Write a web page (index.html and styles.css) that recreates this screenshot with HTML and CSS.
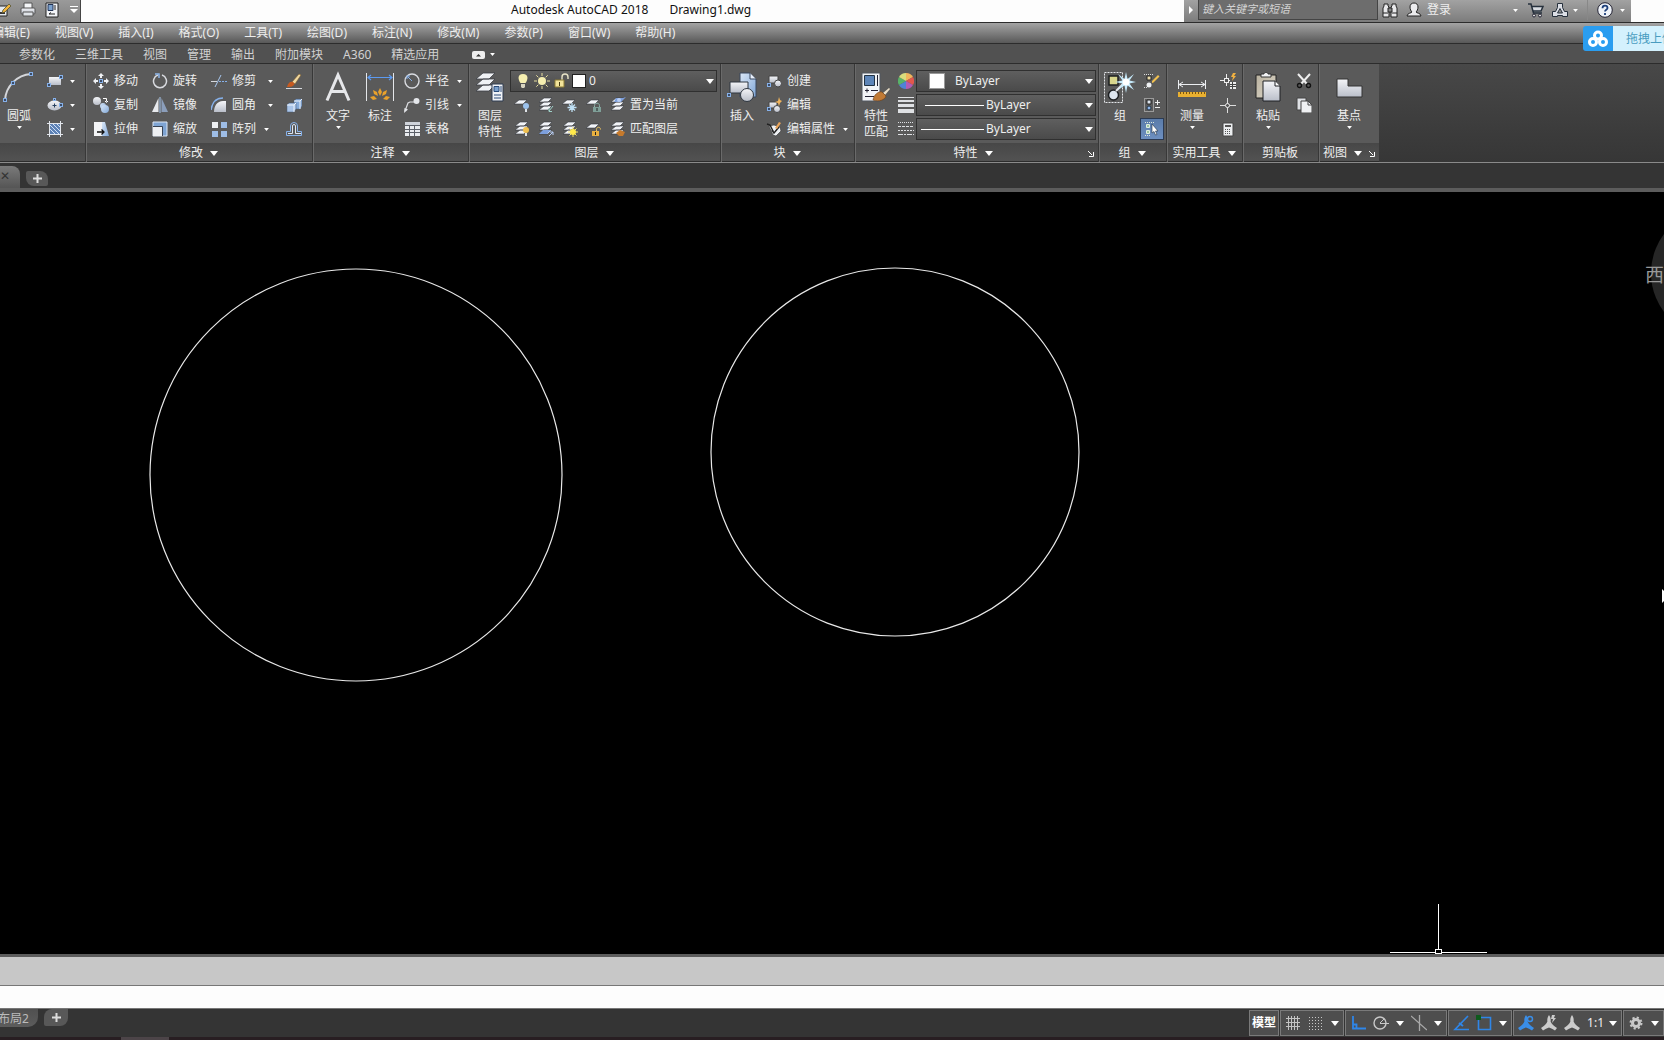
FILE: index.html
```html
<!DOCTYPE html>
<html lang="zh-CN">
<head>
<meta charset="utf-8">
<title>Autodesk AutoCAD 2018 - Drawing1.dwg</title>
<link rel="stylesheet" href="styles.css">
</head>
<body>
<svg class="defs" aria-hidden="true">
  <defs>
    <linearGradient id="steel" x1="0" y1="0" x2="0" y2="1"><stop offset="0" stop-color="#f4f5f8"/><stop offset="1" stop-color="#b9bec9"/></linearGradient>
    <linearGradient id="sky" x1="0" y1="0" x2="1" y2="1"><stop offset="0" stop-color="#dbe8f8"/><stop offset="1" stop-color="#7fa6d6"/></linearGradient>
    <linearGradient id="tan" x1="0" y1="0" x2="1" y2="1"><stop offset="0" stop-color="#b9b19f"/><stop offset="1" stop-color="#ddd8ca"/></linearGradient>
  </defs>
  <symbol id="down" viewBox="0 0 8 5"><path d="M0 0h8L4 5z"/></symbol>
  <symbol id="stack" viewBox="0 0 16 16"><path d="M6 1h8l-4 4H1zM6 5h8l-4 4H1zM6 9h8l-4 4H1z" fill="#f2f4f8" stroke="#33383e" stroke-width=".6"/></symbol>
  <symbol id="sheet" viewBox="0 0 16 16"><path d="M5 3h8L9 7H0z" fill="#f2f4f8" stroke="#33383e" stroke-width=".6"/></symbol>
  <symbol id="person" viewBox="0 0 16 16"><path d="M8 0c1.500 2 2 4.500 1.600 6.500C10.500 9 13 11 16 13l-2 2.500c-2-1.500-4-2.500-6-3-2 .5-4 1.500-6 3L0 13c3-2 5.500-4 6.400-6.500C6 4.500 6.500 2 8 0z"/></symbol>
</svg>

<header class="titlebar">
  <div class="quick">
    <button class="ic" aria-label="另存为"><svg width="16" height="16" viewBox="0 0 16 16"><path d="M0 4h11v10H0z" fill="#e4e9f0" stroke="#222"/><path d="M0 11h9" stroke="#333" stroke-width="2"/><path d="M6 11l1-3 6-6 2 2-6 6z" fill="#f2b43c" stroke="#553" stroke-width=".8"/></svg></button>
    <button class="ic" aria-label="打印"><svg width="16" height="16" viewBox="0 0 16 16"><path d="M4 7V1h8v6" fill="#f5f6f8" stroke="#555"/><rect x="1" y="6" width="14" height="6" rx="1" fill="url(#steel)" stroke="#555"/><path d="M3 10h10v4H3z" fill="#dfe3e8" stroke="#555"/></svg></button>
    <button class="ic" aria-label="图纸集"><svg width="16" height="16" viewBox="0 0 16 16"><path d="M2 1h12v14H2z" fill="#f2f4f7" stroke="#222"/><path d="M4 2.500h5v6H4z" fill="#7aa0cc" stroke="#235"/><path d="M11 3v5M5 12h6M5 12l2-1.500" stroke="#222"/></svg></button>
    <button class="ic more" aria-label="自定义快速访问工具栏"><svg width="8" height="8" viewBox="0 0 8 8" fill="#fff"><path d="M0 0h8v1H0zM0 3h8L4 7z"/></svg></button>
  </div>
  <h1 class="caption"><span>Autodesk AutoCAD 2018</span><span>Drawing1.dwg</span></h1>
  <div class="info">
    <button class="expand" aria-label="收拢"><svg width="4" height="8" viewBox="0 0 4 8"><path d="M0 0l4 4-4 4z" fill="#fff"/></svg></button>
    <input class="search" type="text" aria-label="搜索" placeholder="键入关键字或短语">
    <button class="ic" aria-label="查找"><svg width="16" height="16" viewBox="0 0 16 16"><path d="M2 2h4v2l1 1v10H1V6l1-2zM10 2h4v2l1 2v9H9V5l1-1zM6 6h4v4H6z" fill="#e8e8ea" stroke="#222"/><path d="M1 11h5M10 11h5" stroke="#222"/></svg></button>
    <button class="login"><svg width="16" height="16" viewBox="0 0 16 16"><path d="M8 1c2.500 0 4 1.500 4 4s-1 4-2 5c0 1 5 1 5 4H1c0-3 5-3 5-4-1-1-2-2.500-2-5s1.500-4 4-4z" fill="#ececee" stroke="#222"/></svg><span>登录</span><svg class="tiny" width="5" height="3"><use href="#down"/></svg></button>
    <button class="ic cart" aria-label="应用商店"><svg width="16" height="16" viewBox="0 0 16 16"><path d="M3.500 4.500H15L13 9.500H5.500z" fill="#d8dbe0"/><path d="M0 2h3l2.500 9H14M4 4.500h11L13 9H5" fill="none" stroke="#26303c" stroke-width="1.500"/><circle cx="6" cy="13.500" r="1.500" fill="#ddd" stroke="#223"/><circle cx="12" cy="13.500" r="1.500" fill="#ddd" stroke="#223"/></svg></button>
    <button class="a360" aria-label="保持连接"><svg width="16" height="16" viewBox="0 0 16 16"><path d="M5.500 1.500h5v4l2 4h3v5h-5v-1h-5v1h-5v-5h3l2-4zM8 6.500l-2.500 4.500h5z" fill="#dcdfe6" fill-rule="evenodd" stroke="#26303c" stroke-linejoin="round"/></svg><svg class="tiny" width="5" height="3"><use href="#down"/></svg></button>
    <button class="help" aria-label="帮助"><svg width="16" height="16" viewBox="0 0 16 16"><circle cx="8" cy="8" r="7.300" fill="#eef2f8" stroke="#223"/><path d="M5.500 6.200C5.500 2.800 10.500 3 10.500 6c0 1.600-2.500 1.800-2.500 3.500M8 11v2" fill="none" stroke="#1d3f7a" stroke-width="1.800"/></svg><svg class="tiny" width="5" height="3"><use href="#down"/></svg></button>
  </div>
</header>

<nav class="menubar" aria-label="菜单">
  <button>编辑(E)</button><button>视图(V)</button><button>插入(I)</button><button>格式(O)</button><button>工具(T)</button><button>绘图(D)</button><button>标注(N)</button><button>修改(M)</button><button>参数(P)</button><button>窗口(W)</button><button>帮助(H)</button>
</nav>

<nav class="tabs" aria-label="功能区选项卡">
  <button>参数化</button><button>三维工具</button><button>视图</button><button>管理</button><button>输出</button><button>附加模块</button><button>A360</button><button>精选应用</button>
  <button class="fold" aria-label="最小化功能区"><svg width="13" height="8" viewBox="0 0 13 8"><rect width="13" height="8" rx="2" fill="#eee"/><path d="M4 5.500h5L6.500 3z" fill="#333"/></svg><svg class="tiny" width="5" height="3"><use href="#down"/></svg></button>
</nav>

<main class="ribbon">
  <section class="panel draw">
    <div class="body">
      <button class="big"><svg width="32" height="32" viewBox="0 0 32 32"><path d="M2 29C3 15 14 4 28 3" fill="none" stroke="#d4d6da" stroke-width="2"/><g fill="#3c4c66" stroke="#86b1ea"><rect x=".5" y="27.500" width="3" height="3"/><rect x="8.500" y="10.500" width="3" height="3"/><rect x="26.500" y="1.500" width="3" height="3"/></g></svg><span>圆弧</span><svg class="tiny" width="5" height="3"><use href="#down"/></svg></button>
      <div class="col icons">
        <button class="row" aria-label="矩形"><svg width="16" height="16" viewBox="0 0 16 16"><rect x="2" y="4" width="12" height="8" fill="url(#steel)"/><g fill="#3c4c66" stroke="#86b1ea"><rect x=".5" y="10.500" width="3" height="3"/><rect x="12.500" y="2.500" width="3" height="3"/></g></svg><svg class="tiny" width="5" height="3"><use href="#down"/></svg></button>
        <button class="row" aria-label="椭圆"><svg width="16" height="16" viewBox="0 0 16 16"><ellipse cx="7.500" cy="8.500" rx="7" ry="5" fill="url(#steel)"/><path d="M5.500 8.500h4M7.500 6.500v4" stroke="#26405f"/><g fill="#3c4c66" stroke="#86b1ea"><rect x="12.500" y="6.500" width="3" height="3"/><rect x="6.500" y="1.500" width="2" height="2"/></g></svg><svg class="tiny" width="5" height="3"><use href="#down"/></svg></button>
        <button class="row" aria-label="图案填充"><svg width="16" height="16" viewBox="0 0 16 16"><rect x="3" y="3" width="10" height="10" fill="#5c81b5"/><path d="M3 8l5 5M3 4l9 9M6 3l7 7M10 3l3 3" stroke="#cfe0f7"/><path d="M0 2.500h16M0 13.500h16M2.500 0v16M13.500 0v16" stroke="#e2e6ec"/></svg><svg class="tiny" width="5" height="3"><use href="#down"/></svg></button>
      </div>
    </div>
    <h2></h2>
  </section>

  <section class="panel modify">
    <div class="body">
      <div class="col c1">
        <button class="row"><svg width="16" height="16" viewBox="0 0 16 16"><path d="M8 0l3 3H9v2H7V3H5zM8 16l3-3H9v-2H7v2H5zM0 8l3-3v2h2v2H3v2zM16 8l-3-3v2h-2v2h2v2z" fill="#f0f2f5"/><rect x="6.500" y="6.500" width="3" height="3" fill="#3c4c66" stroke="#86b1ea"/></svg><span>移动</span></button>
        <button class="row"><svg width="16" height="16" viewBox="0 0 16 16"><circle cx="4" cy="4" r="4" fill="url(#steel)"/><circle cx="10" cy="9" r="3" fill="url(#sky)"/><circle cx="12" cy="12" r="4" fill="url(#sky)"/><path d="M10 1.500h3.500v3M12 4l1.500 1.500L15 4" fill="none" stroke="#fff"/></svg><span>复制</span></button>
        <button class="row"><svg width="16" height="16" viewBox="0 0 16 16"><path d="M9 1h3l4 14H9z" fill="url(#sky)"/><path d="M1 1h8v14H1z" fill="#f3f4f6"/><path d="M4 11h7M8.500 8.500L11 11l-2.500 2.500" fill="none" stroke="#111" stroke-width="1.300"/></svg><span>拉伸</span></button>
      </div>
      <div class="col c2">
        <button class="row"><svg width="16" height="16" viewBox="0 0 16 16"><path d="M10 2a6.500 6.500 0 1 1-4 0" fill="none" stroke="#d9dbe0" stroke-width="1.500"/><path d="M3 1h4v4" fill="none" stroke="#8fb6ea" stroke-width="1.500"/></svg><span>旋转</span></button>
        <button class="row"><svg width="16" height="16" viewBox="0 0 16 16"><path d="M6.500 1v14H0z" fill="#e8eaee"/><path d="M9.500 1v14H16z" fill="#8b9ebb"/><path d="M8 0v16" stroke="#a8c8f0"/></svg><span>镜像</span></button>
        <button class="row"><svg width="16" height="16" viewBox="0 0 16 16"><path d="M1 1h14v14H1z" fill="#7ea4d3" stroke="#dce6f4"/><path d="M1 6h9v9H1z" fill="#eef0f3"/><path d="M10.500 15V5.500H1" fill="none" stroke="#384354"/></svg><span>缩放</span></button>
      </div>
      <div class="col c3">
        <button class="row"><svg width="16" height="16" viewBox="0 0 16 16"><path d="M0 8.500h6" stroke="#d6d8dc"/><path d="M8 8.500h8" stroke="#86b1ea" stroke-dasharray="2 1"/><path d="M4 14L10 2" stroke="#a8c8f0"/></svg><span>修剪</span><svg class="tiny" width="5" height="3"><use href="#down"/></svg></button>
        <button class="row"><svg width="16" height="16" viewBox="0 0 16 16"><path d="M0 13C1 6 4 1 12 1" fill="none" stroke="#86b1ea" stroke-width="1.500"/><path d="M3 15c0-6 3-11 9-11h3v11z" fill="url(#steel)"/></svg><span>圆角</span><svg class="tiny" width="5" height="3"><use href="#down"/></svg></button>
        <button class="row array"><svg width="16" height="16" viewBox="0 0 16 16"><rect x="1" y="1" width="6" height="6" fill="#eef0f3"/><path d="M10 1h6v6h-6zM1 10h6v6H1zM10 10h6v6h-6z" fill="#9ebde6"/></svg><span>阵列</span><svg class="tiny" width="5" height="3"><use href="#down"/></svg></button>
      </div>
      <div class="col">
        <button class="row" aria-label="删除"><svg width="16" height="16" viewBox="0 0 16 16"><path d="M6 9l7-8 2 1-6 9z" fill="#f0d9a0" stroke="#7c5a2e" stroke-width=".6"/><path d="M1 14c1-4 3-6 6-5l1.500 2C7 14 4 14 1 14z" fill="#c65a20"/><path d="M0 15.500h16" stroke="#d8dbe0"/></svg></button>
        <button class="row" aria-label="分解"><svg width="16" height="16" viewBox="0 0 16 16"><path d="M8 4l2-2h6v7l-2 3H8z" fill="#86abd9" stroke="#4b5d78" stroke-width=".5"/><path d="M8 4h6v8M14 4l2-2" fill="none" stroke="#eef4fc"/><path d="M1 8l2-2h7v6l-2 3H1z" fill="#a9c4e8" stroke="#4b5d78" stroke-width=".5"/><path d="M1 8h7v7M8 8l2-2" fill="none" stroke="#eef4fc"/></svg></button>
        <button class="row" aria-label="偏移"><svg width="16" height="16" viewBox="0 0 16 16"><path d="M.5 14.500h15v-4h-4V5a3.500 3.500 0 0 0-7 0v5.500h-4z" fill="none" stroke="#86b1ea"/><path d="M2 12.500h4.500V5a1.500 1.500 0 0 1 3 0v7.500H15" fill="none" stroke="#dce6f4"/></svg></button>
      </div>
    </div>
    <h2>修改<svg class="down" width="8" height="5"><use href="#down"/></svg></h2>
  </section>

  <section class="panel note">
    <div class="body">
      <button class="big"><svg width="32" height="32" viewBox="0 0 32 32"><path d="M5 29.500L16 4l11 25.500M9 20.500h14" fill="none" stroke="#e6e7ea" stroke-width="3"/></svg><span>文字</span><svg class="tiny" width="5" height="3"><use href="#down"/></svg></button>
      <button class="big dim"><svg width="32" height="32" viewBox="0 0 32 32"><path d="M2.500 2v28M29.500 2v28" stroke="#e4e6ea"/><path d="M4 6.500h24M7 4L4 6.500 7 9M25 4l3 2.500L25 9" fill="none" stroke="#5c9af0" stroke-width="1.200"/><g fill="#e9a22c"><path d="M16 17l2 4-2 4-2-4zM9 19l4 2 1 4-4-2zM23 19l-4 2-1 4 4-2zM6 26l4-1 3 3-4 1zM26 26l-4-1-3 3 4 1z"/></g></svg><span>标注</span></button>
      <div class="col">
        <button class="row"><svg width="16" height="16" viewBox="0 0 16 16"><circle cx="8" cy="8" r="7" fill="none" stroke="#d9dbe0" stroke-width="1.400"/><path d="M3 3l5 5M3 6V3h3" fill="none" stroke="#86b1ea"/></svg><span>半径</span><svg class="tiny" width="5" height="3"><use href="#down"/></svg></button>
        <button class="row"><svg width="16" height="16" viewBox="0 0 16 16"><path d="M1 14l3-8 2-1h4" fill="none" stroke="#dcdee2" stroke-width="1.200"/><path d="M0 16l.5-5L4 12.500z" fill="#e4e6ea"/><circle cx="12.500" cy="4" r="3" fill="#e4e6ea"/></svg><span>引线</span><svg class="tiny" width="5" height="3"><use href="#down"/></svg></button>
        <button class="row"><svg width="16" height="16" viewBox="0 0 16 16"><path d="M1 1h15v14H1z" fill="#e9ebee"/><path d="M1 1h15v3H1z" fill="#cfd3da"/><path d="M1 4.500h15M1 8.500h15M1 11.500h15M5.500 4v11M10.500 4v11" stroke="#5c6068"/></svg><span>表格</span></button>
      </div>
    </div>
    <h2>注释<svg class="down" width="8" height="5"><use href="#down"/></svg></h2>
  </section>

  <section class="panel layers">
    <div class="body">
      <button class="big"><svg width="32" height="32" viewBox="0 0 32 32"><path d="M9 2h12l-6 6H2zM9 8h12l-6 6H2zM9 14h12l-6 6H2z" fill="#f0f2f5" stroke="#3a3e44" stroke-width=".8"/><path d="M18 13h11v17H18z" fill="#f2f4f7" stroke="#2c3a50"/><path d="M20 15.500h5v5h-5z" fill="#7aa0cc" stroke="#2b4b78"/><path d="M27 15v6M20 24h7M20 27h7" stroke="#2b4b78"/></svg><span>图层</span><span>特性</span></button>
      <div class="col">
        <div class="row"><div class="combo layer">
          <svg width="16" height="16" viewBox="0 0 16 16"><path d="M8 1c6 0 5 6 2.500 9h-5C3 7 2 1 8 1z" fill="#f6efb0"/><path d="M6 11h4v3l-1 1H7l-1-1z" fill="#d8d4c0"/></svg>
          <svg width="16" height="16" viewBox="0 0 16 16"><circle cx="8" cy="8" r="4" fill="#f6efb0"/><path d="M8 0v3M8 13v3M0 8h3M13 8h3M2.300 2.300l2 2M11.700 11.700l2 2M13.700 2.300l-2 2M4.300 11.700l-2 2" stroke="#e8dfa0"/></svg>
          <svg width="16" height="16" viewBox="0 0 16 16"><path d="M9 7V4c0-4 6-4 6 0v2" fill="none" stroke="#e8e4c8" stroke-width="1.400"/><path d="M2 7h9v7H2z" fill="#f3e49a" stroke="#8b7a34"/><path d="M6.500 9v4" stroke="#443a10"/></svg>
          <i class="chip"></i>
          <select aria-label="图层"><option>0</option></select><svg class="down" width="8" height="5"><use href="#down"/></svg>
        </div></div>
        <div class="row set">
          <button class="ic" aria-label="关闭图层"><svg width="16" height="16"><use href="#sheet"/><circle cx="12" cy="9" r="3" fill="#9cc2ec"/><path d="M11 12h2v3h-2z" fill="#dfe3e8"/></svg></button>
          <button class="ic" aria-label="隔离图层"><svg width="16" height="16"><use href="#stack"/><path d="M15 9l-4 5M11 11v3.500h3" stroke="#9fd0c8" fill="none"/></svg></button>
          <button class="ic" aria-label="冻结图层"><svg width="16" height="16"><use href="#sheet"/><path d="M10 6v9M5.500 10.500h9M7 7.500l6 6M13 7.500l-6 6" stroke="#bfe0f5" stroke-width="1.300"/></svg></button>
          <button class="ic" aria-label="锁定图层"><svg width="16" height="16"><use href="#sheet"/><path d="M8.500 11V8.500c0-3 5-3 5 0V11" fill="none" stroke="#8fb3ab"/><path d="M7 10h8v5H7z" fill="#7f9f98"/><path d="M11 11v3" stroke="#222"/></svg></button>
          <button class="text"><svg width="16" height="16"><use href="#stack"/><path d="M6 1h7l3-1-5 5H4z" fill="#7d9fdc"/><circle cx="9" cy="3" r="2" fill="#b9cff5"/></svg><span>置为当前</span></button>
        </div>
        <div class="row set">
          <button class="ic" aria-label="打开所有图层"><svg width="16" height="16"><use href="#stack"/><circle cx="12" cy="9" r="3" fill="#f0c050"/><path d="M11 12h2v3h-2z" fill="#dfe3e8"/></svg></button>
          <button class="ic" aria-label="取消隔离"><svg width="16" height="16"><use href="#stack"/><path d="M5 9h8l-4 4H1z" fill="#7d9fdc"/><path d="M11 15l4-4M12 11h3v3" stroke="#b9cff5" fill="none"/></svg></button>
          <button class="ic" aria-label="解冻所有图层"><svg width="16" height="16"><use href="#stack"/><path d="M11 6v10M6 11h10M7.500 7.500l7 7M14.500 7.500l-7 7" stroke="#f0e070"/><circle cx="11" cy="11" r="3" fill="#ffe94a"/></svg></button>
          <button class="ic" aria-label="解锁图层"><svg width="16" height="16"><use href="#sheet"/><path d="M10.500 11V8.500c0-3 4-3 4 0" fill="none" stroke="#e8c060"/><path d="M6 10h7v5H6z" fill="#e8b040"/><path d="M9.500 11v3" stroke="#222"/></svg></button>
          <button class="text"><svg width="16" height="16"><use href="#stack"/><path d="M6 12l4-3 5 2-2 4H9z" fill="#c67a2c"/></svg><span>匹配图层</span></button>
        </div>
      </div>
    </div>
    <h2>图层<svg class="down" width="8" height="5"><use href="#down"/></svg></h2>
  </section>

  <section class="panel block">
    <div class="body">
      <button class="big"><svg width="32" height="32" viewBox="0 0 32 32"><path d="M14 2h10l6 6v18H14z" fill="url(#sky)" stroke="#39475c"/><path d="M24 2v6h6" fill="#eaf1fb" stroke="#39475c"/><path d="M4 11h18v11H4z" fill="url(#steel)" stroke="#2e3640"/><circle cx="21" cy="24" r="6.500" fill="url(#steel)" stroke="#2e3640"/><rect x="1.500" y="22.500" width="3" height="3" fill="#3c4c66" stroke="#86b1ea"/></svg><span>插入</span></button>
      <div class="col">
        <button class="row"><svg width="16" height="16" viewBox="0 0 16 16"><path d="M3 3h9v7H3z" fill="url(#steel)" stroke="#444"/><circle cx="12" cy="10.500" r="3.500" fill="url(#steel)" stroke="#444"/><rect x="1.500" y="10.500" width="3" height="3" fill="#3c4c66" stroke="#86b1ea"/></svg><span>创建</span></button>
        <button class="row"><svg width="16" height="16" viewBox="0 0 16 16"><path d="M3 5h8v6H3z" fill="url(#steel)" stroke="#444"/><circle cx="11" cy="12" r="3.500" fill="url(#steel)" stroke="#444"/><rect x="1.500" y="10.500" width="3" height="3" fill="#3c4c66" stroke="#86b1ea"/><path d="M9 5l3-1 1-4 1 3 2 1-2 2-1 3-1-3z" fill="#f0b45c"/></svg><span>编辑</span></button>
        <button class="row"><svg width="16" height="16" viewBox="0 0 16 16"><path d="M3 5l5-1 6 2 1 4-5 5-3-1z" fill="#eef0f3" stroke="#333" stroke-width=".6"/><path d="M6 9l2 3 5-6" fill="none" stroke="#222" stroke-width="1.500"/><path d="M9 7l4-6 2 1-4 6z" fill="#e9a45a"/><path d="M1 3l3 1 3 6" fill="none" stroke="#222" stroke-width="1.500"/></svg><span>编辑属性</span><svg class="tiny" width="5" height="3"><use href="#down"/></svg></button>
      </div>
    </div>
    <h2>块<svg class="down" width="8" height="5"><use href="#down"/></svg></h2>
  </section>

  <section class="panel props">
    <div class="body">
      <button class="big"><svg width="32" height="32" viewBox="0 0 32 32"><path d="M2 2h18v28H2z" fill="#f2f4f7" stroke="#50565e"/><path d="M4.500 4.500h10v10h-10z" fill="#5d85b8" stroke="#234"/><path d="M17.500 4v11M5 19.500h4M7 17.500v4M11 19.500h7M5 25.500h9" stroke="#223"/><path d="M23 22l6-5 1 1-5 6z" fill="#ece0c8"/><path d="M13 29c1-5 5-9 9-8l4 4c-1 4-7 6-13 4z" fill="#c07a35" stroke="#6a3c14" stroke-width=".6"/></svg><span>特性</span><span>匹配</span></button>
      <div class="col">
        <div class="row"><svg width="16" height="16" viewBox="0 0 16 16"><path d="M8 8V0a8 8 0 0 1 7 4z" fill="#f0b45c"/><path d="M8 8l7-4a8 8 0 0 1 0 8z" fill="#e2574c"/><path d="M8 8l7 4a8 8 0 0 1-7 4z" fill="#b35bb5"/><path d="M8 8v8a8 8 0 0 1-7-4z" fill="#4f83d6"/><path d="M8 8l-7 4a8 8 0 0 1 0-8z" fill="#58b368"/><path d="M8 8L1 4a8 8 0 0 1 7-4z" fill="#d9dc7c"/></svg><div class="combo color"><i class="chip"></i><select aria-label="对象颜色"><option>ByLayer</option></select><svg class="down" width="8" height="5"><use href="#down"/></svg></div></div>
        <div class="row"><svg width="16" height="16" viewBox="0 0 16 16" fill="#dfe1e4"><path d="M0 0h16v1H0zM0 3h16v2H0zM0 7h16v3H0zM0 12h16v4H0z"/></svg><div class="combo line"><i class="rule"></i><select aria-label="线宽"><option>ByLayer</option></select><svg class="down" width="8" height="5"><use href="#down"/></svg></div></div>
        <div class="row"><svg width="16" height="16" viewBox="0 0 16 16" fill="none" stroke="#dfe1e4"><path d="M0 1.500h16" stroke-dasharray="1 1"/><path d="M0 5.500h16" stroke-dasharray="3 1"/><path d="M0 9.500h16" stroke-dasharray="2 1"/><path d="M0 13.500h16" stroke-dasharray="5 1 2 1"/></svg><div class="combo line wide"><i class="rule"></i><select aria-label="线型"><option>ByLayer</option></select><svg class="down" width="8" height="5"><use href="#down"/></svg></div></div>
      </div>
    </div>
    <h2>特性<svg class="down" width="8" height="5"><use href="#down"/></svg><button class="launch" aria-label="特性选项板"><svg width="6" height="6" viewBox="0 0 6 6"><path d="M0 0l4 4M1 5.500h4.500V1" fill="none" stroke="#fff"/></svg></button></h2>
  </section>

  <section class="panel group">
    <div class="body">
      <button class="big"><svg width="32" height="32" viewBox="0 0 32 32"><rect x=".5" y="1.500" width="18" height="30" fill="none" stroke="#e4e6ea" stroke-dasharray="2 1"/><path d="M5 5h9v9H5z" fill="#d8d68c" stroke="#1d1f22" stroke-width="1.500"/><circle cx="9.500" cy="24" r="5" fill="#dce4ee" stroke="#1d1f22" stroke-width="1.500"/><path d="M12 20l7-7" stroke="#e6e8ec" stroke-width="2"/><path d="M22 1l1.500 7L30 3l-4.500 6.500L32 11l-6.500 1.500L30 19l-6.500-4.500L22 22l-1.500-7.500L14 19l4.500-6.500L11 11l7.500-1.500L14 3l6.500 5z" fill="#c5e9fa"/><circle cx="22" cy="11" r="3.500" fill="#fff"/></svg><span>组</span></button>
      <div class="col">
        <button class="row" aria-label="解除编组"><svg width="16" height="16" viewBox="0 0 16 16"><path d="M0 1.500h10M0 14.500h3" stroke="#ddd" stroke-dasharray="1 1"/><path d="M3 3h4v4H3z" fill="#e8d9a8" stroke="#222"/><circle cx="5" cy="12" r="2.500" fill="#eef0f3"/><path d="M8 8l6-6 1.500 1.500-6 6L8 10z" fill="#f0c050"/></svg></button>
        <button class="row" aria-label="组编辑"><svg width="16" height="16" viewBox="0 0 16 16"><rect x=".5" y="1.500" width="9" height="13" fill="none" stroke="#ddd" stroke-dasharray="1 1"/><path d="M3 3h4v4H3z" fill="#dfe6ee" stroke="#222"/><circle cx="5" cy="11" r="2" fill="#8fb6ea" stroke="#234"/><path d="M11 5.500h5M13.500 3v5M11 10.500h5" stroke="#eee"/></svg></button>
        <button class="row on" aria-label="启用组选择" aria-pressed="true"><svg width="16" height="16" viewBox="0 0 16 16"><path d="M1 1.500h10M1 14.500h5" stroke="#dfe8d8" stroke-dasharray="1 1"/><path d="M2.500 3.500h3v3h-3zM2.500 9.500h3v3h-3z" fill="#9cc4a0" stroke="#dfeee0"/><path d="M8 3l6 7h-2.500l1.500 3.500-1.500.5-1.500-3.500L8 12z" fill="#fff" stroke="#234" stroke-width=".6"/></svg></button>
      </div>
    </div>
    <h2>组<svg class="down" width="8" height="5"><use href="#down"/></svg></h2>
  </section>

  <section class="panel util">
    <div class="body">
      <button class="big"><svg width="32" height="32" viewBox="0 0 32 32"><path d="M2.500 9v9M29.500 9v9M3 13.500h26M7 11l-4 2.500L7 16M25 11l4 2.500-4 2.500" fill="none" stroke="#eceef1"/><path d="M2 21h28v5H2z" fill="#e9b030"/><path d="M4.500 21v2M7.500 21v2M10.500 21v2M13.500 21v2M16.500 21v2M19.500 21v2M22.500 21v2M25.500 21v2M28.500 21v2" stroke="#7b5510"/></svg><span>测量</span><svg class="tiny" width="5" height="3"><use href="#down"/></svg></button>
      <div class="col">
        <button class="row" aria-label="快速选择"><svg width="16" height="16" viewBox="0 0 16 16"><path d="M0 7.500h10M6.500 1v12" stroke="#eee"/><rect x="4.500" y="5.500" width="4" height="4" fill="#555" stroke="#eee"/><path d="M13 0h3l-2 3h2l-4 5 1-4h-2z" fill="#f0b040"/><path d="M10 9h6v7h-6z" fill="#eee"/><path d="M10 11.500h6M10 13.500h6M12.500 9v7" stroke="#444"/></svg></button>
        <button class="row" aria-label="点坐标"><svg width="16" height="16" viewBox="0 0 16 16"><path d="M0 8.500h16M7.500 1v15" stroke="#ddd"/><circle cx="7.500" cy="8.500" r="2" fill="#555" stroke="#eee"/></svg></button>
        <button class="row" aria-label="快速计算器"><svg width="16" height="16" viewBox="0 0 16 16"><path d="M3 2h10v13H3z" fill="#eceef0" stroke="#444"/><path d="M5 4h6v2H5z" fill="#555"/><path d="M5 8.500h6M5 10.500h6M5 12.500h6" stroke="#555" stroke-dasharray="1 1"/></svg></button>
      </div>
    </div>
    <h2>实用工具<svg class="down" width="8" height="5"><use href="#down"/></svg></h2>
  </section>

  <section class="panel clip">
    <div class="body">
      <button class="big"><svg width="32" height="32" viewBox="0 0 32 32"><path d="M4 4h20v23H4z" fill="url(#tan)" stroke="#222"/><path d="M9 6V3h3c0-2 4-2 4 0h3v3z" fill="#f2f3f5" stroke="#333"/><path d="M11 10h12l5 5v15H11z" fill="url(#steel)" stroke="#1e2024"/><path d="M23 10v5h5" fill="#fff" stroke="#1e2024"/></svg><span>粘贴</span><svg class="tiny" width="5" height="3"><use href="#down"/></svg></button>
      <div class="col">
        <button class="row" aria-label="剪切"><svg width="16" height="16" viewBox="0 0 16 16"><path d="M2 1l9 10M14 1L5 11" stroke="#eee" stroke-width="2"/><circle cx="3.500" cy="12.500" r="2" fill="none" stroke="#111" stroke-width="1.400"/><circle cx="12.500" cy="12.500" r="2" fill="none" stroke="#111" stroke-width="1.400"/></svg></button>
        <button class="row" aria-label="复制剪裁"><svg width="16" height="16" viewBox="0 0 16 16"><path d="M1 1h9v12H1z" fill="#dfe1e5" stroke="#444"/><path d="M5 4h7l4 4v8H5z" fill="#f0f1f3" stroke="#444"/><path d="M12 4v4h4" fill="none" stroke="#444"/></svg></button>
      </div>
    </div>
    <h2>剪贴板</h2>
  </section>

  <section class="panel base">
    <div class="body">
      <button class="big"><svg width="32" height="32" viewBox="0 0 32 32"><path d="M4 8h11v7h14v11H4z" fill="url(#steel)" stroke="#333"/></svg><span>基点</span><svg class="tiny" width="5" height="3"><use href="#down"/></svg></button>
    </div>
    <h2>视图<svg class="down" width="8" height="5"><use href="#down"/></svg><button class="launch" aria-label="视图设置"><svg width="6" height="6" viewBox="0 0 6 6"><path d="M0 0l4 4M1 5.500h4.500V1" fill="none" stroke="#fff"/></svg></button></h2>
  </section>
</main>

<div class="files">
  <button class="file" aria-label="关闭 Drawing1">✕</button>
  <button class="add" aria-label="新图形"><svg width="9" height="9" viewBox="0 0 9 9"><path d="M0 4.500h9M4.500 0v9" stroke="#ddd" stroke-width="2"/></svg></button>
</div>

<div class="canvas">
  <svg class="drawing" width="100%" height="100%">
    <g fill="none" stroke="#e8e8e8" stroke-width="1.200">
      <circle cx="356" cy="283" r="206"/>
      <circle cx="895" cy="260" r="184"/>
    </g>
    <g fill="none" stroke="#fff">
      <path d="M1438.500 712v46M1390 760.500h45M1442 760.500h45"/>
      <rect x="1435.500" y="757.500" width="6" height="4"/>
    </g>
  </svg>
  <div class="compass"><span>西</span></div>
  <svg class="pointer" width="2" height="14" viewBox="0 0 2 14"><path d="M0 0l2 2v10l-2 2z" fill="#fff"/></svg>
</div>

<div class="history"></div>
<input class="command" type="text" aria-label="命令">

<footer class="status">
  <div class="layouts">
    <button class="layout">布局2</button>
    <button class="add" aria-label="新建布局"><svg width="9" height="9" viewBox="0 0 9 9"><path d="M0 4.500h9M4.500 0v9" stroke="#ddd" stroke-width="2"/></svg></button>
  </div>
  <div class="modes">
    <div class="cell model"><button>模型</button></div>
    <div class="cell">
      <button class="ic" aria-label="栅格"><svg width="16" height="16" viewBox="0 0 16 16"><path d="M1 3.500h14M1 7.500h14M1 11.500h14M3.500 1v14M6.500 1v14M9.500 1v14M12.500 1v14" stroke="#c4c4c4" fill="none" stroke-width="1"/></svg></button>
      <button class="ic" aria-label="捕捉"><svg width="16" height="16" viewBox="0 0 16 16"><path d="M1 2.500h15M1 5.500h15M1 8.500h15M1 11.500h15M1 14.500h15" stroke="#c8c8c8" stroke-dasharray="1 2"/></svg></button>
      <button class="arrow" aria-label="捕捉设置"><svg class="down" width="8" height="5"><use href="#down"/></svg></button>
    </div>
    <div class="cell">
      <button class="ic" aria-label="正交"><svg width="16" height="16" viewBox="0 0 16 16"><path d="M3 1v12.500h13M3 9.500h3.500V13" fill="none" stroke="#2f86e8" stroke-width="1.800"/></svg></button>
      <button class="ic" aria-label="极轴追踪"><svg width="16" height="16" viewBox="0 0 16 16"><circle cx="7" cy="8" r="6" fill="none" stroke="#c8c8c8" stroke-width="1.400"/><path d="M7 8.500h9M7 8l4-4" stroke="#c8c8c8"/></svg></button>
      <button class="arrow" aria-label="极轴设置"><svg class="down" width="8" height="5"><use href="#down"/></svg></button>
      <button class="ic" aria-label="等轴测草图"><svg width="16" height="16" viewBox="0 0 16 16"><path d="M8.500 0v16M0 1l16 14" stroke="#a8a8a8" stroke-width="1.300"/></svg></button>
      <button class="arrow" aria-label="等轴测设置"><svg class="down" width="8" height="5"><use href="#down"/></svg></button>
    </div>
    <div class="cell">
      <button class="ic" aria-label="对象捕捉追踪"><svg width="16" height="16" viewBox="0 0 16 16"><path d="M15 1L2 14.500h14" fill="none" stroke="#2f86e8" stroke-width="1.600"/><path d="M6 8l4 3" stroke="#2f86e8" stroke-width="2"/></svg></button>
      <button class="ic" aria-label="对象捕捉"><svg width="16" height="16" viewBox="0 0 16 16"><path d="M2.500 2.500h12v12h-12z" fill="none" stroke="#2f86e8" stroke-width="1.600"/><path d="M0 0h5v5H0z" fill="#0d5a1c"/></svg></button>
      <button class="arrow" aria-label="捕捉选项"><svg class="down" width="8" height="5"><use href="#down"/></svg></button>
    </div>
    <div class="cell">
      <button class="ic" aria-label="注释可见性"><svg width="16" height="16" fill="#3a8ee8"><use href="#person"/><circle cx="12" cy="4" r="2.500" fill="none" stroke="#3a8ee8" stroke-width="1.500"/></svg></button>
      <button class="ic" aria-label="自动缩放"><svg width="16" height="16" fill="#ccc"><use href="#person"/><path d="M11 0l-1 4h2l-1 4 4-5h-2l1-3z"/></svg></button>
      <button class="ic" aria-label="注释比例"><svg width="16" height="16" fill="#ccc"><use href="#person"/></svg></button>
      <button class="scale">1:1<svg class="down" width="8" height="5"><use href="#down"/></svg></button>
    </div>
    <div class="cell">
      <button class="ic" aria-label="切换工作空间"><svg width="16" height="16" viewBox="0 0 16 16"><circle cx="8" cy="8" r="3.500" fill="none" stroke="#c8c8c8" stroke-width="3"/><circle cx="8" cy="8" r="5.500" fill="none" stroke="#c8c8c8" stroke-width="2" stroke-dasharray="2.200 2.120"/></svg></button>
      <button class="arrow" aria-label="工作空间列表"><svg class="down" width="8" height="5"><use href="#down"/></svg></button>
    </div>
  </div>
</footer>
<div class="desktop"></div>

<a class="upload" href="#upload"><svg width="20" height="18" viewBox="0 0 20 18"><g fill="none" stroke="#fff" stroke-width="3"><circle cx="10" cy="5.500" r="3.500"/><circle cx="5" cy="12" r="3.500"/><circle cx="15" cy="12" r="3.500"/></g></svg><span>拖拽上传</span></a>
</body>
</html>
```
FILE: styles.css
```css
* { box-sizing: border-box; }
body {
  margin: 0;
  min-height: 100vh;
  display: flex;
  flex-direction: column;
  position: relative;
  overflow: hidden;
  background: #343434;
  color: #eee;
  font: 12px/16px "Noto Sans", "Noto Sans CJK SC", sans-serif;
}
.defs { position: absolute; width: 0; height: 0; }
h1, h2 { margin: 0; font: inherit; }
button, input, select { font: inherit; color: inherit; background: none; border: 0; margin: 0; padding: 0; }
button { display: flex; align-items: center; white-space: nowrap; }
svg { display: block; flex: none; }
.tiny, .down { fill: #fff; }
.ic { width: 16px; flex: none; justify-content: center; }

/* title bar */
.titlebar {
  display: flex;
  justify-content: space-between;
  height: 22px;
  background: #fdfdfd;
  flex: none;
}
.quick {
  display: flex;
  gap: 8px;
  width: 81px;
  padding: 0 4px 3px 0;
  margin-right: 400px;
  background: linear-gradient(#9a9a9a, #808080);
  border-right: 1px solid #444;
}
.quick .ic:first-child { margin-left: -4px; }
.quick .more { width: 12px; }
.caption {
  display: flex;
  gap: 21px;
  flex: 1;
  margin-left: 30px;
  color: #111;
  line-height: 20px;
  white-space: nowrap;
}
.info {
  display: flex;
  align-items: stretch;
  width: 447px;
  margin-right: 33px;
  padding-bottom: 2px;
  background: linear-gradient(#a2a2a2, #7c7c7c);
}
.expand { width: 14px; justify-content: center; }
.search {
  width: 180px;
  padding: 0 3px 2px;
  margin-right: 4px;
  border: 1px solid #444;
  border-top: 0;
  background: #6d6d6d;
  font-size: 11px;
  font-style: italic;
}
.search::placeholder { color: #d4d4d4; opacity: 1; }
.login { width: 120px; margin-left: 8px; gap: 5px; }
.login .tiny { margin-left: auto; margin-right: 8px; }
.cart { margin: 0 8px 0 2px; }
.a360 { gap: 5px; width: 36px; border-right: 1px solid #888; }
.help { gap: 7px; margin-left: 9px; }

/* menu bar and ribbon tabs */
.menubar, .tabs { display: flex; flex: none; }
.menubar {
  height: 22px;
  gap: 25px;
  border-top: 1px solid #2c2c2c;
  border-bottom: 1px solid #2c2c2c;
  background: linear-gradient(#a4a4a4, #585858);
}
.menubar button:first-child { margin-left: -8px; }
.tabs {
  height: 20px;
  padding: 2px 0 0 19px;
  gap: 20px;
  border-bottom: 1px solid #2c2c2c;
  background: #515151;
  color: #d2d2d2;
}
.tabs .fold { gap: 5px; margin-left: 13px; }

/* ribbon */
.ribbon {
  display: flex;
  height: 99px;
  flex: none;
  border-bottom: 1px solid #8a8a8a;
  background: linear-gradient(#484848, #363636);
}
.panel {
  display: flex;
  flex-direction: column;
  flex: none;
  border-right: 1px solid #383838;
  border-left: 1px solid #6a6a6a;
  background: #5a5a5a;
}
.panel .body { display: flex; height: 79px; padding-top: 1px; }
.panel h2 {
  display: flex;
  align-items: center;
  justify-content: center;
  gap: 7px;
  height: 19px;
  padding: 2px 2px 0 0;
  position: relative;
  background: linear-gradient(#474747, #525252);
  border-bottom: 1px solid #2c2c2c;
}
.launch { position: absolute; right: 4px; top: 8px; }
.big {
  flex-direction: column;
  width: 32px;
  padding-top: 6px;
  flex: none;
}
.big > svg:first-child { margin-bottom: 5px; }
.big .tiny { margin-top: 2px; }
.col { display: flex; flex-direction: column; padding-top: 4px; }
.row { display: flex; align-items: center; gap: 5px; height: 24px; }
.row .tiny { margin-left: 7px; }
.icons .row .tiny { margin-left: 2px; }
.array .tiny { margin-left: 3px; }
.set { gap: 8px; padding-left: 4px; }
.text { gap: 4px; }

.draw { width: 86px; border-left: 0; }
.draw .big { margin: 0 12px 0 3px; }
.modify { width: 227px; }
.modify .body { padding-left: 6px; }
.c1 { width: 59px; }
.c2 { width: 59px; }
.c3 { width: 75px; }
.note { width: 156px; }
.note .body { padding-left: 8px; gap: 8px; }
.note .row .tiny { margin-left: 3px; }
.dim { margin-left: 2px; }
.layers { width: 252px; }
.layers .body { padding-right: 3px; padding-left: 4px; gap: 4px; }
.layers .col { flex: 1; }
.block { width: 134px; }
.block .body { padding-left: 4px; gap: 8px; }
.block .row .tiny { margin-left: 3px; }
.props { width: 244px; }
.props .body { padding-right: 2px; padding-left: 4px; gap: 6px; }
.props .col { flex: 1; }
.props .row { gap: 2px; }
.props h2 { padding-right: 8px; }
.group { width: 68px; }
.group .body { padding-left: 4px; gap: 4px; }
.group .col .row { width: 24px; height: 22px; margin: 1px 0; justify-content: center; }
.group .on { border: 1px solid #2b3a52; background: linear-gradient(#5b7caa, #6d8fc0); }
.util { width: 76px; }
.util .body { padding-left: 8px; gap: 12px; }
.clip { width: 76px; }
.clip .body { padding-left: 8px; gap: 12px; }
.base { width: 60px; border-right: 0; }
.base .body { padding-left: 13px; }
.base h2 { padding-right: 14px; }

.combo {
  display: flex;
  align-items: center;
  flex: 1;
  gap: 4px;
  height: 22px;
  padding: 0 2px 0 4px;
  border: 1px solid #303030;
  background: linear-gradient(#5f5f5f, #4a4a4a);
}
.combo select { flex: 1; min-width: 0; appearance: none; outline: 0; }
.layer { gap: 3px; }
.chip { width: 14px; height: 14px; background: #fff; border: 1px solid #222; }
.color .chip { width: 16px; height: 16px; margin: 0 6px 0 8px; border-color: #999; }
.rule { width: 59px; height: 1px; margin: 0 -2px 0 4px; background: #fff; }
.wide .rule { width: 63px; margin-left: 0; }

/* drawing tabs */
.files {
  display: flex;
  height: 29px;
  flex: none;
  border-bottom: 4px solid #5c5c5c;
  background: #343434;
}
.file {
  width: 20px;
  margin-top: 3px;
  padding-bottom: 2px;
  background: linear-gradient(#7a7a7a, #555);
  border-radius: 0 8px 0 0;
  color: #333;
}
.add {
  justify-content: center;
  width: 22px;
  height: 15px;
  background: #585858;
  border-radius: 2px 8px 2px 8px;
}
.files .add { margin: 8px 0 0 6px; }

/* model space */
.canvas { flex: 1; position: relative; overflow: hidden; background: #000; }
.drawing { position: absolute; inset: 0; }
.compass {
  position: absolute;
  right: -117px;
  top: 16px;
  width: 130px;
  height: 130px;
  border-radius: 50%;
  background: #262626;
  color: #999;
  font-size: 19px;
  line-height: 134px;
}
.compass span { margin-left: -6px; }
.pointer { position: absolute; right: 0; top: 397px; }

/* command line */
.history { height: 32px; flex: none; border-top: 3px solid #5c5c5c; border-bottom: 1px solid #777; background: #c7c7c7; }
.command { height: 22px; flex: none; width: 100%; background: #fdfdfd; color: #111; outline: 0; }

/* status bar */
.status {
  display: flex;
  justify-content: space-between;
  height: 29px;
  flex: none;
  border-top: 1px solid #777;
  background: #343434;
}
.layouts { display: flex; gap: 6px; }
.layout {
  width: 40px;
  height: 18px;
  padding-top: 2px;
  background: linear-gradient(#505050, #5c5c5c);
  border-radius: 0 0 10px 0;
  color: #bbb;
  margin-left: -2px;
}
.layouts .add { width: 24px; height: 17px; border-radius: 8px 0 8px 2px; }
.modes { display: flex; gap: 1px; padding: 1px 0; }
.cell {
  display: flex;
  align-items: center;
  gap: 7px;
  padding: 0 4px;
  border: 1px solid #7a7a7a;
  background: #4e4e4e;
}
.model { padding: 0 2px; font-weight: 700; color: #fff; }
.arrow { width: 8px; }
.scale { gap: 5px; }
.desktop { height: 3px; flex: none; background: linear-gradient(90deg, #281e22 0 121px, #4c4448 121px 169px, #281e22 169px); }

/* cloud upload widget */
.upload {
  position: absolute;
  right: 0;
  top: 26px;
  display: flex;
  align-items: center;
  width: 81px;
  height: 25px;
  overflow: hidden;
  border-radius: 3px 0 0 3px;
  background: linear-gradient(90deg, #2a9df0 30px, #d4f1fd 30px);
  color: #4a9cc0;
  text-decoration: none;
  white-space: nowrap;
}
.upload svg { margin: 0 18px 0 5px; }
```
